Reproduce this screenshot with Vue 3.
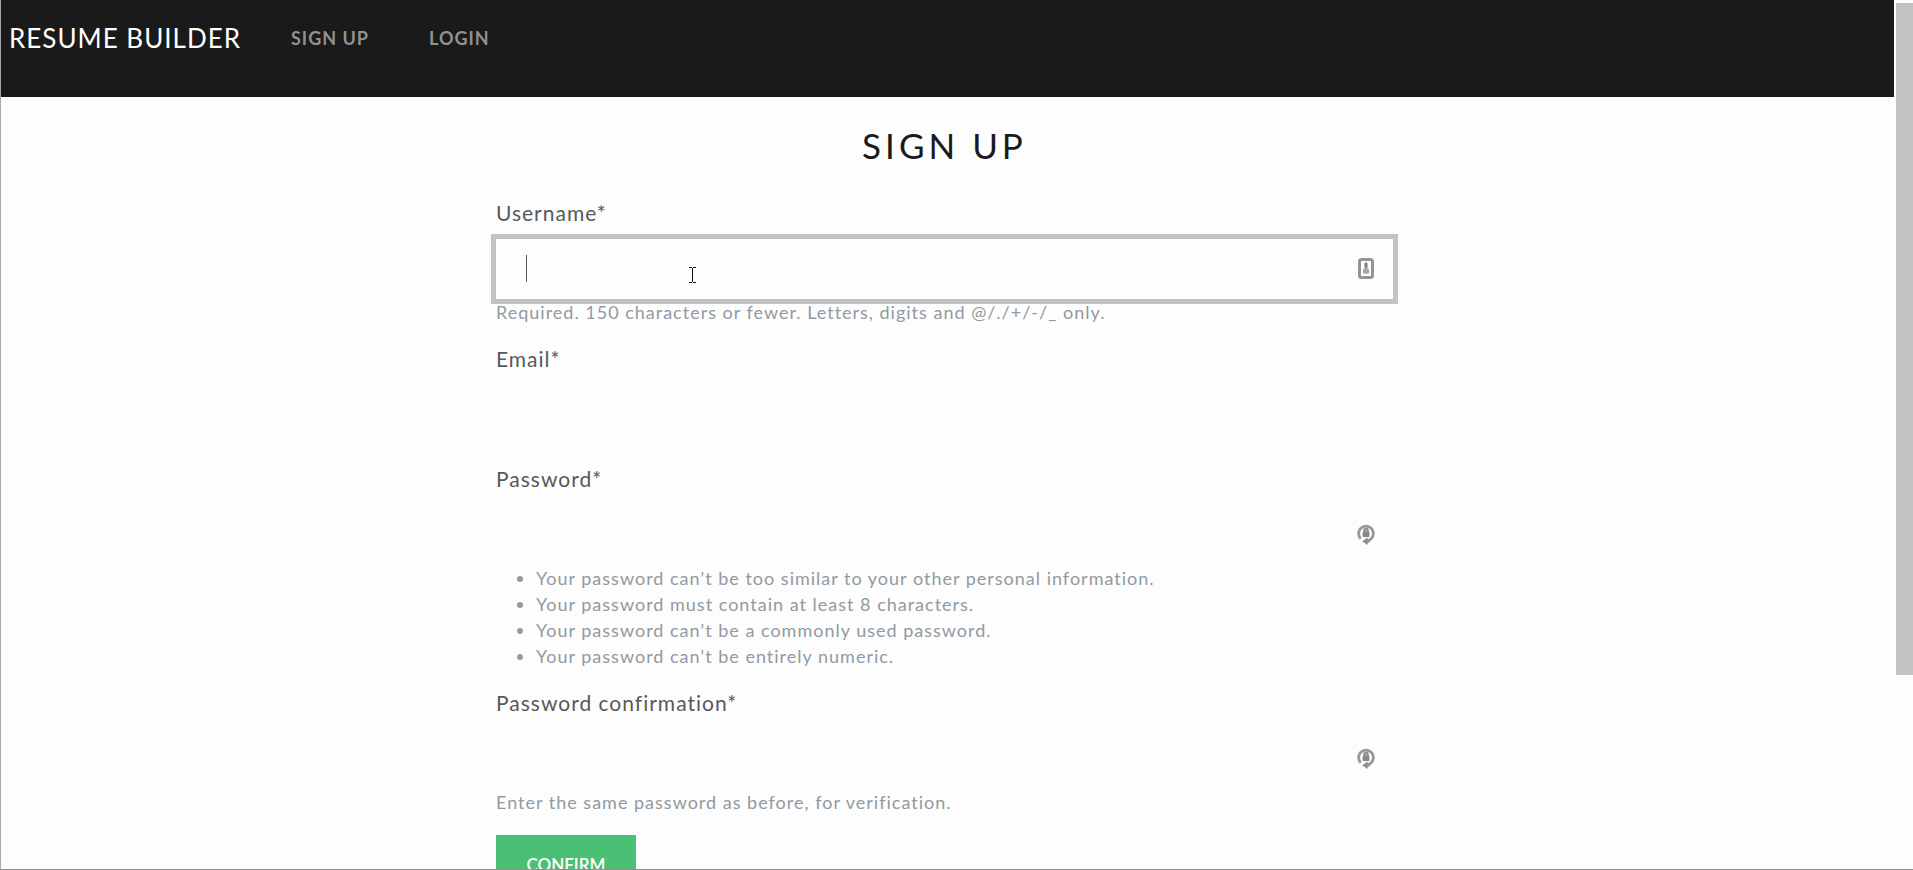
<script setup>
import { reactive } from 'vue'

const form = reactive({ username: '', email: '', password: '', confirmation: '' })

const fields = [
  {
    id: 'username',
    label: 'Username*',
    type: 'text',
    icon: 'card',
    active: true,
    help: 'Required. 150 characters or fewer. Letters, digits and @/./+/-/_ only.',
  },
  { id: 'email', label: 'Email*', type: 'email' },
  {
    id: 'password',
    label: 'Password*',
    type: 'password',
    icon: 'lock',
    rules: [
      'Your password can’t be too similar to your other personal information.',
      'Your password must contain at least 8 characters.',
      'Your password can’t be a commonly used password.',
      'Your password can’t be entirely numeric.',
    ],
  },
  {
    id: 'confirmation',
    label: 'Password confirmation*',
    type: 'password',
    icon: 'lock',
    help: 'Enter the same password as before, for verification.',
  },
]
</script>

<template>
  <div class="window">
    <div class="page">
      <nav class="navbar">
        <a class="brand" href="#">Resume Builder</a>
        <a class="nav-link" href="#signup">Sign up</a>
        <a class="nav-link" href="#login">Login</a>
      </nav>

      <main class="content">
        <form class="form" @submit.prevent>
          <h2 class="title">Sign up</h2>

          <div v-for="field in fields" :key="field.id" class="group">
            <label class="label" :for="field.id">{{ field.label }}</label>
            <div class="field">
              <input
                :id="field.id"
                v-model="form[field.id]"
                class="input"
                :class="{ active: field.active }"
                :type="field.type"
              />
              <template v-if="field.active">
                <span class="caret"></span>
                <svg class="pointer" viewBox="0 0 7 16" shape-rendering="crispEdges">
                  <path d="M0 0h3v1h1v-1h3v1h-3v14h3v1h-3v-1h-1v1h-3v-1h3v-14h-3z" fill="#111" />
                </svg>
              </template>
              <svg v-if="field.icon === 'card'" class="icon" viewBox="0 0 18 22">
                <rect x="2.500" y="1.500" width="13" height="18" rx="2" fill="#fdfdfd" stroke="#979393" stroke-width="3" />
                <path d="M9 4.200a1.600 1.600 0 0 1 1.600 1.600v3a1.600 1.600 0 0 1-3.200 0v-3a1.600 1.600 0 0 1 1.600-1.600z" fill="#858383" />
                <path d="M6 12q0-1.700 1.700-1.700h2.600q1.700 0 1.700 1.700v2.700q0 1-1 1H7q-1 0-1-1z" fill="#aaa4a3" />
              </svg>
              <svg v-else-if="field.icon === 'lock'" class="icon" viewBox="0 0 18 22">
                <path d="M3.700 14.600A7.400 7.400 0 1 1 14.300 14.600Q12.500 16.600 10 17" fill="none" stroke="#999595" stroke-width="2.800" />
                <path d="M10.500 13.600v7.400L5.400 17.300z" fill="#8b8888" />
                <path d="M9.500 15l4.200 1.800L9.500 20.500z" fill="#999595" />
                <path d="M6.900 9V6.600a2.100 2.100 0 0 1 4.200 0V9" fill="#aaa6a6" stroke="#8a8787" stroke-width="1.400" />
                <rect x="5.600" y="8" width="6.800" height="5" rx="0.800" fill="#8a8787" />
              </svg>
            </div>
            <p v-if="field.help" class="help">{{ field.help }}</p>
            <ul v-if="field.rules" class="help rules">
              <li v-for="rule in field.rules" :key="rule">{{ rule }}</li>
            </ul>
          </div>

          <button class="confirm" type="submit">Confirm</button>
        </form>
      </main>
    </div>
    <div class="scrollbar"><div class="thumb"></div></div>
  </div>
</template>

<style>
body {
  background: #fdfdfd;
}
</style>

<style scoped>
.window {
  box-sizing: border-box;
  display: flex;
  height: 100vh;
  overflow: hidden;
  border-left: 1px solid #aaa4a4;
  border-bottom: 1px solid #8f8f8f;
  background: #fdfdfd;
  color: #55595c;
  font-family: Lato, "Open Sans", sans-serif;
  font-size: 18px;
  letter-spacing: 1px;
}
.page {
  flex: 1;
  min-width: 0;
}
.navbar {
  box-sizing: border-box;
  display: flex;
  align-items: flex-start;
  height: 97px;
  padding: 22px 8px;
  background: #1a1a1a;
  line-height: 32px;
  text-transform: uppercase;
}
.brand {
  margin-right: 20px;
  color: #fff;
  font-size: 26px;
  text-decoration: none;
}
.nav-link {
  padding: 0 30px;
  color: #919191;
  font-weight: 700;
  text-decoration: none;
}
.content {
  padding: 26px 6px 0 0;
}
.form {
  max-width: 897px;
  margin: 0 auto;
}
.title {
  margin: 0 0 32px;
  color: #1a1a1a;
  font-size: 35px;
  font-weight: 400;
  line-height: 44px;
  letter-spacing: 4px;
  text-align: center;
  text-transform: uppercase;
}
.group {
  margin-bottom: 20px;
}
.label {
  display: block;
  margin-bottom: 12px;
  font-size: 21px;
  line-height: 28px;
}
.field {
  position: relative;
}
.input {
  box-sizing: border-box;
  display: block;
  width: 100%;
  height: 60px;
  padding: 0 50px 0 30px;
  border: 0;
  outline: 0;
  background: #fdfdfd;
  color: inherit;
  font: inherit;
  letter-spacing: inherit;
}
.input.active {
  box-shadow: 0 0 0 5px #c3c3c3;
}
.caret {
  position: absolute;
  top: 16px;
  left: 30px;
  width: 1px;
  height: 27px;
  background: #55595c;
}
.pointer {
  position: absolute;
  top: 28px;
  left: 193px;
  width: 7px;
  height: 16px;
}
.icon {
  position: absolute;
  top: 19px;
  right: 18px;
  width: 18px;
  height: 22px;
}
.help {
  margin: 0;
  color: #919aa1;
  font-size: 18px;
  line-height: 26px;
}
.rules {
  padding-left: 40px;
}
.confirm {
  min-width: 140px;
  height: 58px;
  padding: 0 30px;
  border: 0;
  background: #4bbf73;
  color: #fff;
  font: inherit;
  font-size: 17px;
  font-weight: 600;
  letter-spacing: 0;
  text-transform: uppercase;
}
.scrollbar {
  width: 17px;
  padding: 3px 0 0 2px;
}
.thumb {
  height: 672px;
  background: #c3c3c3;
}
</style>
